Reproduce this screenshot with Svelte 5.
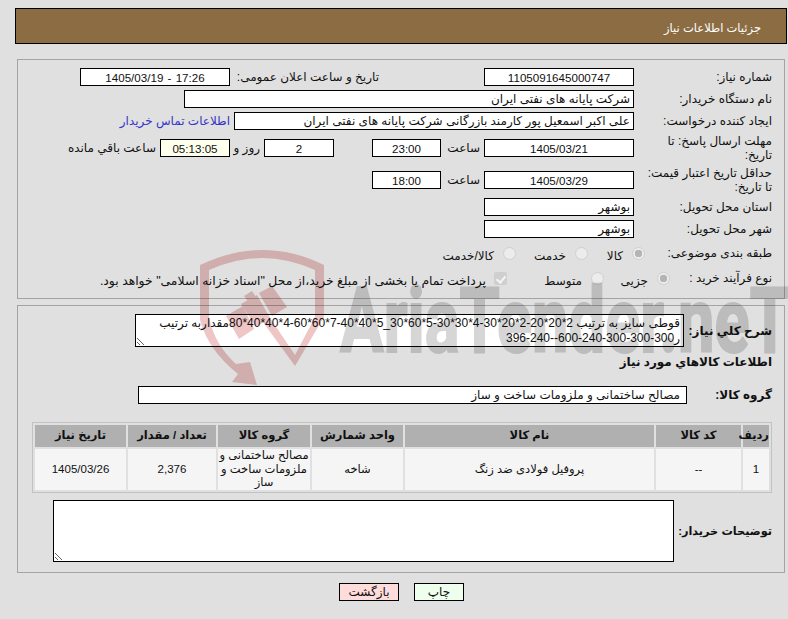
<script>
  const items = [
    { id: 1, code: '--', name: 'پروفیل فولادی ضد زنگ', unit: 'شاخه', group: 'مصالح ساختمانی و ملزومات ساخت و ساز', qty: '2,376', date: '1405/03/26' }
  ];
  const summary = 'قوطی سایز به ترتیب 2*20*20-2*20*30-4*30*30-5*60*30_5*40*40-7*60*60-4*40*40*80مقداربه ترتیب ر300-300-300-240-600--240-396';
</script>

<main dir="rtl">
  <header class="title">جزئیات اطلاعات نیاز</header>

  <section class="panel first">
    <div class="row">
      <span class="label">شماره نیاز:</span>
      <input class="field date num" readonly value="1105091645000747" />
      <span class="label announce">تاریخ و ساعت اعلان عمومی:</span>
      <input class="field date num stamp" readonly value="17:26 - 1405/03/19" />
    </div>
    <div class="row">
      <span class="label">نام دستگاه خریدار:</span>
      <input class="field buyer" readonly value="شرکت پایانه های نفتی ایران" />
    </div>
    <div class="row">
      <span class="label">ایجاد کننده درخواست:</span>
      <input class="field creator" readonly value="علی اکبر اسمعیل پور کارمند بازرگانی شرکت پایانه های نفتی ایران" />
      <a class="contact" href="#contact">اطلاعات تماس خریدار</a>
    </div>
    <div class="row tall">
      <span class="label">مهلت ارسال پاسخ: تا<br />تاریخ:</span>
      <input class="field date num" readonly value="1405/03/21" />
      <span class="hour">ساعت</span>
      <input class="field time num" readonly value="23:00" />
      <input class="field time days num" readonly value="2" />
      <span class="day-word">روز و</span>
      <input class="field time left num" readonly value="05:13:05" />
      <span class="remain">ساعت باقي مانده</span>
    </div>
    <div class="row tall">
      <span class="label">حداقل تاریخ اعتبار قیمت:<br />تا تاریخ:</span>
      <input class="field date num" readonly value="1405/03/29" />
      <span class="hour">ساعت</span>
      <input class="field time num" readonly value="18:00" />
    </div>
    <div class="row">
      <span class="label">استان محل تحویل:</span>
      <input class="field date start" readonly value="بوشهر" />
    </div>
    <div class="row">
      <span class="label">شهر محل تحویل:</span>
      <input class="field date start" readonly value="بوشهر" />
    </div>
    <div class="row choice subject">
      <span class="label">طبقه بندی موضوعی:</span>
      <label class="opt kala"><input type="radio" name="subject" checked disabled />کالا</label>
      <label class="opt khedmat"><input type="radio" name="subject" disabled />خدمت</label>
      <label class="opt"><input type="radio" name="subject" disabled />کالا/خدمت</label>
    </div>
    <div class="row choice process">
      <span class="label">نوع فرآیند خرید :</span>
      <label class="opt small"><input type="radio" name="process" checked disabled />جزیی</label>
      <label class="opt medium"><input type="radio" name="process" disabled />متوسط</label>
      <label class="opt payment"><input type="checkbox" checked disabled />پرداخت تمام یا بخشی از مبلغ خرید،از محل "اسناد خزانه اسلامی" خواهد بود.</label>
    </div>
  </section>

  <section class="panel second">
    <div class="row summary">
      <strong class="label">شرح کلي نیاز:</strong>
      <textarea class="field" readonly value={summary}></textarea>
    </div>
    <h3>اطلاعات کالاهاي مورد نیاز</h3>
    <div class="row group">
      <strong class="label">گروه کالا:</strong>
      <input class="field" readonly value="مصالح ساختمانی و ملزومات ساخت و ساز" />
    </div>
    <table>
      <thead>
        <tr>
          <th class="c-id">ردیف</th>
          <th class="c-code">کد کالا</th>
          <th class="c-name">نام کالا</th>
          <th class="c-unit">واحد شمارش</th>
          <th class="c-group">گروه کالا</th>
          <th class="c-qty">تعداد / مقدار</th>
          <th>تاریخ نیاز</th>
        </tr>
      </thead>
      <tbody>
        {#each items as item}
          <tr>
            <td>{item.id}</td>
            <td>{item.code}</td>
            <td class="name">{item.name}</td>
            <td>{item.unit}</td>
            <td>{item.group}</td>
            <td>{item.qty}</td>
            <td>{item.date}</td>
          </tr>
        {/each}
      </tbody>
    </table>
    <div class="row notes">
      <strong class="label">توضیحات خریدار:</strong>
      <textarea class="field" readonly></textarea>
    </div>
  </section>

  <div class="actions">
    <button class="print">چاپ</button>
    <button class="back">بازگشت</button>
  </div>

  <svg class="watermark" width="788" height="150" viewBox="0 236 788 150" aria-hidden="true">
    <path class="shield" fill-rule="evenodd" d="M200 265 Q232 250 262 250 Q294 250 324 265 L324 317 L295 366 L244 296 L252 291 L295 355 L315 317 L315 270 Q288 258 262 258 Q236 258 209 270 L209 318 Q215 345 236 364 L250 362 L257 385 L232 382 L238 374 Q208 350 200 320 Z" />
    <path class="shield" d="M226 316 L243 306 L254 329 L239 339 Z" />
    <path class="shield" d="M241 304 L257 295 L270 318 L256 327 Z" />
    <path class="shield" d="M259 293 L272 286 L287 307 L272 316 Z" />
    <text x="340" y="352" textLength="450" lengthAdjust="spacingAndGlyphs" font-size="90" font-weight="700">AriaTender.neT</text>
  </svg>
</main>

<style>
  :global(body) {
    background: #e0e0e0;
  }

  main {
    position: relative;
    height: 619px;
    padding-top: 8px;
    box-sizing: border-box;
    overflow: hidden;
    font-family: "Liberation Sans", "DejaVu Sans", sans-serif;
    font-size: 12px;
    color: #111;
  }

  main * {
    box-sizing: border-box;
  }

  .title {
    height: 36px;
    margin: 0 1px 0 15px;
    padding-right: 25px;
    border: 1px solid #000;
    background: #8c6d43;
    color: #fff;
    font-size: 11.5px;
    line-height: 38px;
  }

  .panel {
    width: 768px;
    margin-right: 3px;
    padding: 8px 12px 0 0;
    border: 1px solid #a4a4a4;
  }

  .first {
    height: 240px;
    margin-top: 15px;
  }

  .second {
    height: 268px;
    margin-top: 6px;
  }

  .row {
    display: flex;
    align-items: center;
    min-height: 18px;
    margin-bottom: 4px;
  }

  .tall {
    min-height: 28px;
  }

  .label {
    flex: none;
    width: 138px;
    line-height: 14px;
    white-space: nowrap;
  }

  .field {
    flex: none;
    height: 18px;
    padding: 0 3px;
    border: 1px solid #000;
    border-radius: 0;
    background: #fff;
    color: #111;
    font: inherit;
    outline: none;
  }

  .num {
    font-size: 11.6px;
  }

  .stamp {
    word-spacing: 1px;
  }

  .date {
    width: 150px;
    text-align: center;
  }

  .date.start {
    text-align: right;
  }

  .announce {
    width: 149px;
    margin-right: 105px;
  }

  .buyer {
    width: 450px;
  }

  .creator {
    width: 400px;
  }

  .contact {
    margin-right: 4px;
    color: #3535c8;
    text-decoration: none;
  }

  .hour {
    width: 39px;
    margin-right: 4px;
  }

  .time {
    width: 69px;
    text-align: center;
  }

  .days {
    margin-right: 38px;
    width: 70px;
  }

  .day-word {
    width: 30px;
    margin-right: 4px;
  }

  .left {
    width: 70px;
    background: #ffffee;
  }

  .remain {
    margin-right: 4px;
  }

  .choice {
    height: 22px;
  }

  .subject .label {
    width: 127px;
  }

  .process {
    height: 20px;
  }

  .process .label {
    width: 102px;
  }

  .opt {
    display: flex;
    align-items: flex-start;
    flex: none;
    margin-top: 6px;
    line-height: 19px;
  }

  .kala {
    width: 57px;
  }

  .khedmat {
    width: 72px;
  }

  .small {
    width: 66px;
  }

  .medium {
    width: 97px;
  }

  .payment {
    font-size: 12.4px;
  }

  .opt input {
    appearance: none;
    flex: none;
    width: 13px;
    height: 13px;
    margin: 0 0 0 9px;
    border: 1px solid #d0d0d0;
    border-radius: 50%;
    background: #ececec;
  }

  .opt input[type="radio"]:checked {
    background: radial-gradient(circle, #b4b4b4 0 3.5px, #ececec 4px);
  }

  .opt input[type="checkbox"] {
    margin-left: 8px;
    border: 0;
    border-radius: 2px;
    background: #cfcfcf;
    position: relative;
  }

  .opt input[type="checkbox"]::after {
    content: "";
    position: absolute;
    left: 4px;
    top: 2px;
    width: 4px;
    height: 7px;
    border: solid #f4f4f4;
    border-width: 0 2px 2px 0;
    transform: rotate(40deg);
  }

  .summary {
    margin-bottom: 0;
  }

  .summary .label {
    width: 88px;
  }

  .summary textarea {
    width: 549px;
    height: 33px;
    padding: 1px 3px;
    line-height: 15px;
  }

  h3 {
    margin: 7px 0 0;
    font-size: 12px;
    line-height: 16px;
  }

  .group {
    margin: 16px 0 0;
  }

  .group .label {
    width: 85px;
  }

  .group input {
    width: 549px;
    padding-right: 6px;
  }

  strong.label,
  h3 {
    font-weight: 700;
  }

  table {
    width: 740px;
    margin-top: 18px;
    border: 1px solid #c2c2c2;
    border-spacing: 2px;
    table-layout: fixed;
    text-align: center;
    font-size: 11.5px;
  }

  th,
  td {
    padding: 0;
    line-height: 13.5px;
  }

  th {
    height: 22px;
    background: #b0b0b0;
    color: #111;
  }

  td {
    height: 41px;
    background: #f5f5f5;
  }

  .c-id { width: 26px; }
  .c-code { width: 85px; }
  .c-name { width: 249px; }
  .c-unit { width: 91px; }
  .c-group { width: 92px; }
  .c-qty { width: 88px; }

  .notes {
    margin: 7px 0 0;
  }

  .notes .label {
    width: 98px;
    font-size: 11.3px;
  }

  .notes textarea {
    width: 621px;
    height: 62px;
  }

  .actions {
    display: flex;
    justify-content: center;
    gap: 15px;
    margin-top: 10px;
    padding-left: 15px;
  }

  button {
    height: 18px;
    padding: 0;
    border: 1px solid #000;
    border-radius: 0;
    color: #111;
    font: inherit;
  }

  .back {
    width: 60px;
    background: #ffdcdc;
  }

  .print {
    width: 50px;
    background: #eeffee;
  }

  .watermark {
    position: absolute;
    left: 0;
    top: 236px;
    direction: ltr;
    mix-blend-mode: multiply;
    pointer-events: none;
    font-family: Roboto, sans-serif;
  }

  .shield {
    fill: #eec6c6;
  }

  .watermark text {
    fill: #d6d6d6;
    stroke: #d6d6d6;
    stroke-width: 2px;
  }
</style>
